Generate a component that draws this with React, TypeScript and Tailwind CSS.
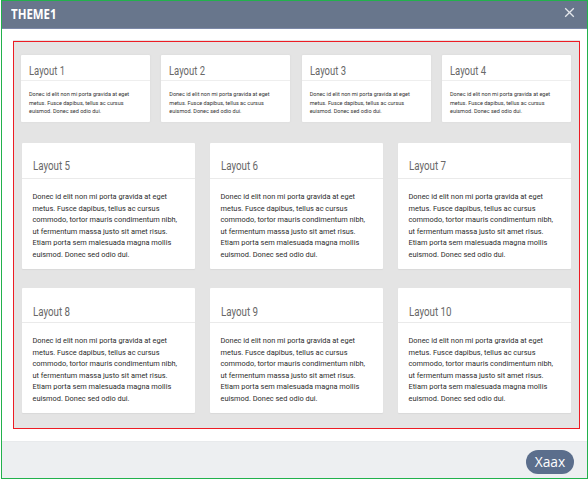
import React from "react";

const smallLines = [
  "Donec id elit non mi porta gravida at eget",
  "metus. Fusce dapibus, tellus ac cursus",
  "euismod. Donec sed odio dui.",
];

const largeLines = [
  "Donec id elit non mi porta gravida at eget",
  "metus. Fusce dapibus, tellus ac cursus",
  "commodo, tortor mauris condimentum nibh,",
  "ut fermentum massa justo sit amet risus.",
  "Etiam porta sem malesuada magna mollis",
  "euismod. Donec sed odio dui.",
];

function SmallCard({ name }: { name: string }) {
  return (
    <article className="h-[67px] w-[129px] rounded-[1px] bg-white shadow-[0_0_2px_#d6d6d6]">
      <h2 className="h-[26px] border-b border-[#eeeeee] pl-2 pt-2 text-[12.4px] leading-[15px] text-[#686868]">
        <span className="inline-block origin-left scale-x-[0.765] whitespace-nowrap">{name}</span>
      </h2>
      <div className="pl-2 pt-[9px] text-[5.5px] leading-[8.6px] text-[#333333]">
        {smallLines.map((line) => (
          <p key={line} className="whitespace-nowrap">{line}</p>
        ))}
      </div>
    </article>
  );
}

function LargeCard({ name, last = false }: { name: string; last?: boolean }) {
  return (
    <article className={`w-[173px] rounded-[1px] bg-white shadow-[0_1px_1px_#d9d9d9] ${last ? "h-[125px]" : "h-[126px]"}`}>
      <h2 className={`border-b border-[#eaeaea] pl-[11px] text-[13.2px] leading-4 text-[#686868] ${last ? "h-[35px] pt-4" : "h-9 pt-[15px]"}`}>
        <span className="inline-block origin-left scale-x-[0.74] whitespace-nowrap">{name}</span>
      </h2>
      <div className="pl-[11px] pt-3 text-[7.4px] leading-[11.6px] text-[#2c2c2c]">
        {largeLines.map((line) => (
          <p key={line} className="whitespace-nowrap">{line}</p>
        ))}
      </div>
    </article>
  );
}

export default function App() {
  return (
    <div className="h-[479px] w-[588px] bg-white pl-px">
      <div className="flex h-[479px] w-[587px] flex-col border border-[#22b14c] font-['Roboto',sans-serif]">
        <header className="flex h-7 shrink-0 items-center justify-between border-b border-[#7b88a7] bg-[#68768c] pl-[9px] pr-3 text-white">
          <h1 className="font-['Open_Sans',sans-serif] text-[14.5px] font-bold leading-none">
            <span className="inline-block origin-left scale-x-[0.79]">THEME1</span>
          </h1>
          <button aria-label="Close" className="mt-[-4px]">
            <svg width="11" height="11" viewBox="0 0 11 11" fill="none" stroke="#e5e8ec" strokeWidth="1.3">
              <path d="M1.2 1.2 9.8 9.8M9.8 1.2 1.2 9.8" />
            </svg>
          </button>
        </header>
        <main className="h-[412px] shrink-0 px-[11px] pt-[11px]">
          <div className="h-px w-[567px] bg-[#e4e4e4]" />
          <section className="flex h-[388px] w-[567px] flex-col border border-[#ed1c24] bg-[#e4e4e4] pl-[7px] pr-2 pt-[13px]">
            <div className="flex w-[550px] justify-between">
              <SmallCard name="Layout 1" />
              <SmallCard name="Layout 2" />
              <SmallCard name="Layout 3" />
              <SmallCard name="Layout 4" />
            </div>
            <div className="mt-[21px] flex w-[549.5px] justify-between pl-[0.5px]">
              <LargeCard name="Layout 5" />
              <LargeCard name="Layout 6" />
              <LargeCard name="Layout 7" />
            </div>
            <div className="mt-[19px] flex w-[549.5px] justify-between pl-[0.5px]">
              <LargeCard name="Layout 8" last />
              <LargeCard name="Layout 9" last />
              <LargeCard name="Layout 10" last />
            </div>
          </section>
        </main>
        <footer className="flex grow items-center justify-end border-t border-[#e8eaec] bg-[#edeff1] pr-[13px] pt-[3px]">
          <button className="h-6 w-12 rounded-full bg-[#5b6e8c] font-['Open_Sans',sans-serif] text-[13.8px] leading-6 text-white">Xaax</button>
        </footer>
      </div>
    </div>
  );
}
